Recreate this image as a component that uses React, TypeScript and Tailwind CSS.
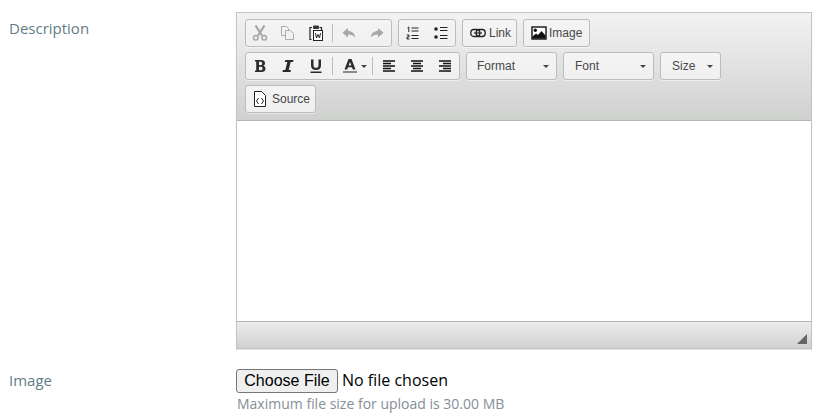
import type { ReactNode } from 'react';

const Ico = ({ children, w = 16, h = 16 }: { children: ReactNode; w?: number; h?: number }) => (
  <svg width={w} height={h} viewBox={`0 0 ${w} ${h}`} className="block shrink-0" fill="none">
    {children}
  </svg>
);

// toolbar icons, drawn on a 16px grid like the editor's own sprite
const CutIcon = () => (
  <Ico>
    <path d="M3.500 0.500l6.500 10M12.500 0.500L6 10.500" stroke="#a6a6a6" strokeWidth="2.200" />
    <circle cx="3.800" cy="12.800" r="2.300" stroke="#a6a6a6" strokeWidth="1.500" />
    <circle cx="12.200" cy="12.800" r="2.300" stroke="#a6a6a6" strokeWidth="1.500" />
  </Ico>
);

const CopyIcon = () => (
  <Ico>
    <path d="M1.500 1.500h5l2 2v7h-7z" stroke="#adadad" />
    <path d="M5.500 5.500h5l3 3v6h-8z" stroke="#adadad" fill="#f1f1f1" />
  </Ico>
);

const PasteWordIcon = () => (
  <Ico>
    <path d="M3.500 14.500h-1.500v-12h2M11.500 2.500h2v3" stroke="#222" strokeWidth="1.200" />
    <rect x="5" y="0.500" width="6" height="3.500" rx="1" fill="#333" />
    <rect x="5.500" y="5.500" width="9" height="10" fill="#fff" stroke="#222" />
    <path d="M7.500 8l1 5 1.500-3.500 1.500 3.500 1-5" stroke="#222" />
  </Ico>
);

const UndoIcon = () => (
  <Ico>
    <path d="M7 3L1.500 7.800 7 12.500V9.600c3 0 5.200.7 7.200 3-.4-4-3-6.500-7.200-6.800z" fill="#a8a8a8" />
  </Ico>
);

const RedoIcon = () => (
  <Ico>
    <path d="M9 3l5.500 4.800L9 12.500V9.600c-3 0-5.200.7-7.200 3 .4-4 3-6.500 7.200-6.800z" fill="#a8a8a8" />
  </Ico>
);

const NumberedIcon = () => (
  <Ico>
    <path d="M6.500 3h7M6.500 6h7M6.500 10.500h7M6.500 13.500h7" stroke="#222" />
    <path d="M2.500 2.800l1.300-.8v5M1.800 10h2.200v2H2v2h2.500" stroke="#222" strokeWidth="1" />
  </Ico>
);

const BulletIcon = () => (
  <Ico>
    <circle cx="3" cy="4" r="1.800" fill="#222" />
    <circle cx="3" cy="12" r="1.800" fill="#222" />
    <path d="M7 2.500h7.500M7 5.500h7.500M7 10.500h7.500M7 13.500h7.500" stroke="#222" />
  </Ico>
);

const LinkIcon = () => (
  <Ico>
    <rect x="0.800" y="4.500" width="9" height="7" rx="3" stroke="#222" strokeWidth="1.300" />
    <rect x="6.200" y="4.500" width="9" height="7" rx="3" stroke="#222" strokeWidth="1.300" />
    <path d="M4 8h8" stroke="#222" strokeWidth="1.200" />
  </Ico>
);

const ImageIcon = () => (
  <Ico>
    <rect x="1" y="2" width="14" height="12" fill="#fff" stroke="#111" strokeWidth="1.400" />
    <circle cx="4.300" cy="5.300" r="1.700" fill="#111" />
    <path d="M1.500 13.500v-2l3.500-3 2 1.500 3.500-4 4 4.500v3z" fill="#111" />
  </Ico>
);

const SourceIcon = () => (
  <Ico>
    <path d="M2.500.5h7l4 4v11h-11z" fill="#fff" stroke="#222" />
    <path d="M6.500 7L4.500 10l2 3M9.500 7l2 3-2 3" stroke="#222" />
  </Ico>
);

const BoldIcon = () => (
  <Ico>
    <path
      fillRule="evenodd"
      d="M3 2h6c2.500 0 4 1.200 4 3.200 0 1.300-.7 2.200-1.800 2.600C12.700 8.200 13.500 9.300 13.500 10.700c0 2-1.600 3.300-4 3.300H3v-1.500h1.200v-9H3zM7 3.800v3.200h1.600c1 0 1.600-.6 1.600-1.600s-.6-1.600-1.600-1.600zM7 8.800v3.400h2c1 0 1.600-.7 1.600-1.700S10 8.800 9 8.800z"
      fill="#2b2b2b"
    />
  </Ico>
);

const ItalicIcon = () => (
  <Ico>
    <path d="M5.500 2h8l-.4 2h-2.400L8.700 12h2.200l-.4 2h-8l.4-2h2.400l2-8H4.600z" fill="#2b2b2b" />
  </Ico>
);

const UnderlineIcon = () => (
  <Ico>
    <path d="M3 1.500v6c0 3 2 4.500 5 4.500s5-1.500 5-4.500v-6h-2.500v6c0 1.500-1 2.300-2.500 2.300s-2.500-.8-2.500-2.300v-6z" fill="#2b2b2b" />
    <path d="M2.500 13.500h11V15h-11z" fill="#2b2b2b" />
  </Ico>
);

const ColorIcon = () => (
  <Ico>
    <path fillRule="evenodd" d="M6.500 1h3l4 10.500h-2.700l-.8-2.200H6l-.8 2.200H2.500zM8 3.800L6.700 7.500h2.600z" fill="#2b2b2b" />
    <path d="M1 13h14v2H1z" fill="#8a8a8a" />
  </Ico>
);

const AlignIcon = ({ kind }: { kind: 'left' | 'center' | 'right' }) => {
  const short = kind === 'left' ? 'M2 5.500h8M2 10.500h8' : kind === 'center' ? 'M4 5.500h8M4 10.500h8' : 'M6 5.500h8M6 10.500h8';
  return (
    <Ico>
      <path d="M2 3h12M2 8h12M2 13h12" stroke="#111" strokeWidth="1.600" />
      <path d={short} stroke="#111" strokeWidth="1.600" />
    </Ico>
  );
};

const Caret = () => <span className="block w-0 h-0 border-x-[3px] border-x-transparent border-t-[3px] border-t-[#444]" />;

const Group = ({ children }: { children: ReactNode }) => (
  <div className="flex items-center h-[28px] rounded-[3px] border border-[#bcbcbc] bg-gradient-to-b from-[#f4f4f4] to-[#f0f0f0] shadow-[0_1px_0_rgba(255,255,255,0.5)]">
    {children}
  </div>
);

const IconBtn = ({ children }: { children: ReactNode }) => (
  <span className="flex items-center justify-center w-[28px] h-[26px]">{children}</span>
);

const Sep = ({ className }: { className: string }) => <span className={`block w-px h-[18px] bg-[#bcbcbc] ${className}`} />;

const TextBtn = ({ icon, label, className }: { icon: ReactNode; label: string; className: string }) => (
  <Group>
    <span className={`flex items-center text-[12px] text-[#474747] ${className}`}>
      {icon}
      <span>{label}</span>
    </span>
  </Group>
);

const Combo = ({ label, className }: { label: string; className: string }) => (
  <Group>
    <span className={`flex items-center justify-between text-[12px] text-[#484848] ${className}`}>
      <span>{label}</span>
      <Caret />
    </span>
  </Group>
);

const Editor = () => (
  <div className="w-[576px] h-[337px] flex flex-col border border-[#c4c4c4] shadow-[0_1px_1px_rgba(0,0,0,0.1)] font-['Liberation_Sans',sans-serif]">
    <div className="h-[108px] flex flex-col gap-[5px] pt-[6px] pl-[8px] border-b border-[#b6b6b6] bg-gradient-to-b from-[#f2f2f2] to-[#cfd1cf]">
      <div className="flex gap-[6px]">
        <Group>
          <IconBtn><CutIcon /></IconBtn>
          <IconBtn><CopyIcon /></IconBtn>
          <IconBtn><PasteWordIcon /></IconBtn>
          <Sep className="mx-[2px]" />
          <IconBtn><UndoIcon /></IconBtn>
          <IconBtn><RedoIcon /></IconBtn>
        </Group>
        <Group>
          <IconBtn><NumberedIcon /></IconBtn>
          <IconBtn><BulletIcon /></IconBtn>
        </Group>
        <TextBtn icon={<LinkIcon />} label="Link" className="w-[53px] pl-[7px] gap-[3px]" />
        <TextBtn icon={<ImageIcon />} label="Image" className="w-[65px] pl-[7px] gap-[2px]" />
      </div>
      <div className="flex gap-[6px]">
        <Group>
          <IconBtn><BoldIcon /></IconBtn>
          <IconBtn><ItalicIcon /></IconBtn>
          <IconBtn><UnderlineIcon /></IconBtn>
          <Sep className="ml-[2px] mr-px" />
          <span className="flex items-center gap-[3px] w-[37px] h-[26px] pl-[8px]">
            <ColorIcon />
            <Caret />
          </span>
          <Sep className="ml-px mr-[2px]" />
          <IconBtn><AlignIcon kind="left" /></IconBtn>
          <IconBtn><AlignIcon kind="center" /></IconBtn>
          <IconBtn><AlignIcon kind="right" /></IconBtn>
        </Group>
        <Combo label="Format" className="w-[89px] pl-[10px] pr-[7px]" />
        <Combo label="Font" className="w-[89px] pl-[11px] pr-[7px]" />
        <Combo label="Size" className="w-[59px] pl-[11px] pr-[7px]" />
      </div>
      <div className="flex">
        <TextBtn icon={<SourceIcon />} label="Source" className="w-[69px] pl-[6px] gap-[4px]" />
      </div>
    </div>
    <div className="flex-1 bg-white" />
    <div className="h-[27px] flex items-end justify-end border-t border-[#b6b6b6] bg-gradient-to-b from-[#ececec] to-[#cfd1cf] pr-[4px] pb-[4px]">
      <span className="block w-0 h-0 border-l-[10px] border-l-transparent border-b-[10px] border-b-[#666]" />
    </div>
  </div>
);

export default function App() {
  return (
    <div className="w-[826px] h-[419px] overflow-hidden bg-white font-['Open_Sans',sans-serif]">
      <div className="flex pt-[12px]">
        <label className="w-[236px] pl-[9px] pt-[5px] text-[15px] leading-[22px] text-[#5f7d86]">Description</label>
        <Editor />
      </div>
      <div className="flex mt-[20px]">
        <label className="w-[236px] pl-[9px] text-[15px] leading-[22px] text-[#5f7d86]">Image</label>
        <div>
          <div className="flex items-center h-[24px] text-[16px] text-black">
            <button className="h-[24px] w-[102px] pb-px leading-[18px] rounded-[3px] border border-[#767676] bg-[#efefef] font-['Liberation_Sans',sans-serif]">Choose File</button>
            <span className="ml-[4px] pb-[2px]">No file chosen</span>
          </div>
          <p className="mt-px ml-px text-[14px] leading-[20px] text-[#868e96]">Maximum file size for upload is 30.00 MB</p>
        </div>
      </div>
    </div>
  );
}
